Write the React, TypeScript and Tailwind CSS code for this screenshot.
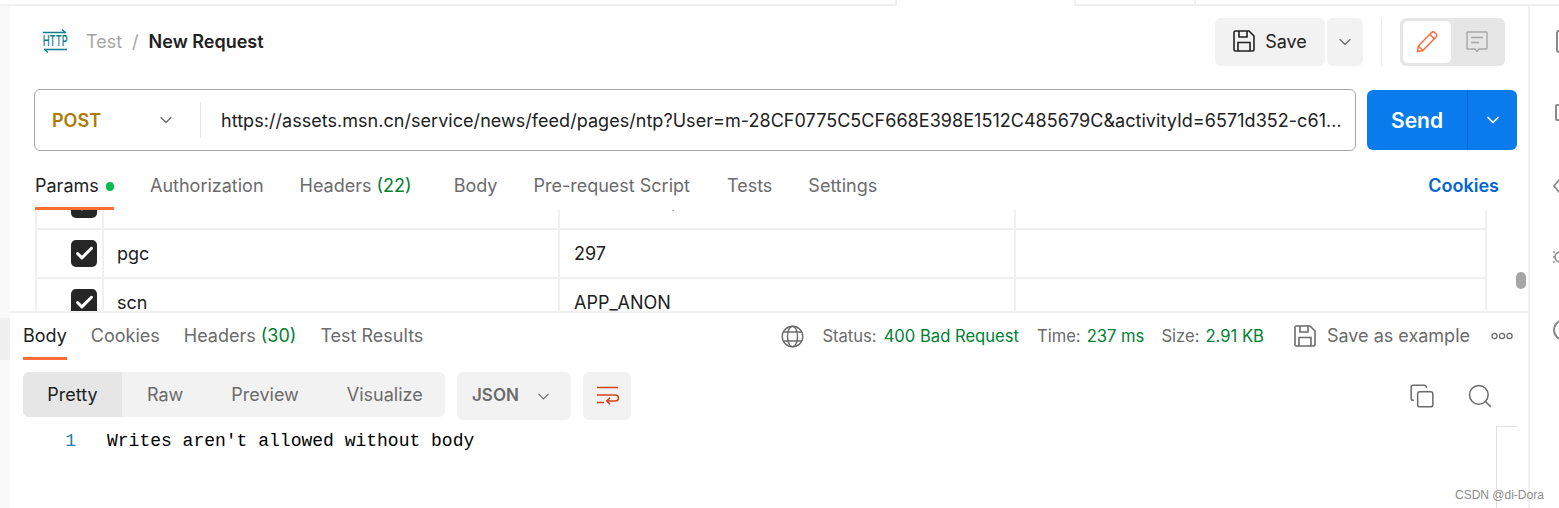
import { Check, ChevronDown, Copy, Search } from "lucide-react"

function HttpIcon() {
  return (
    <div className="flex w-[24px] flex-col items-center text-[#0E7C8B]">
      <svg width="24" height="5" viewBox="0 0 24 5" fill="none" stroke="currentColor" strokeWidth="1.3" className="block">
        <path d="M0 3.500h23M19 .5l3.500 3" />
      </svg>
      <span className="scale-x-[0.62] text-[15px] font-medium leading-[14px]">HTTP</span>
      <svg width="24" height="5" viewBox="0 0 24 5" fill="none" stroke="currentColor" strokeWidth="1.3" className="block">
        <path d="M1 1.500h23M5 4.500l-3.500-3" />
      </svg>
    </div>
  )
}

function SaveIcon({ className }: { className: string }) {
  return (
    <svg viewBox="0 0 22 22" fill="none" stroke="currentColor" strokeWidth="1.6" className={className}>
      <path d="M1 2.500a1.500 1.500 0 0 1 1.500-1.500h13.500l5 5v13.500a1.500 1.500 0 0 1-1.500 1.500h-17a1.500 1.500 0 0 1-1.500-1.500z" />
      <path d="M6 1v6h8V1M5 21v-8.500h12V21" />
    </svg>
  )
}

function PencilIcon() {
  return (
    <svg width="24" height="24" viewBox="0 0 24 24" fill="none" stroke="#FF6C37" strokeWidth="1.5">
      <path d="M2.500 21.500l.8-5.500L16.500 2.500a2.200 2.200 0 0 1 3.200 0l1.300 1.300a2.200 2.200 0 0 1 0 3.200L7.800 20.500z" />
      <path d="M15 4.500l4.500 4.500M3.300 16l4.500 4.500" />
    </svg>
  )
}

function CommentIcon() {
  return (
    <svg width="22" height="22" viewBox="0 0 22 22" fill="none" stroke="#A6A6A6" strokeWidth="1.4">
      <path d="M1.500 1h19a.5.5 0 0 1 .5.500v16a.5.5 0 0 1-.5.500h-7.500l-2 2.500-2-2.500h-7.500a.5.5 0 0 1-.5-.500v-16a.5.5 0 0 1 .5-.500z" />
      <path d="M5 6.500h12M5 11.500h8" />
    </svg>
  )
}

function GlobeIcon() {
  return (
    <svg width="23" height="23" viewBox="0 0 23 23" fill="none" stroke="#6B6B6B" strokeWidth="1.4">
      <circle cx="11.500" cy="11.500" r="10.300" />
      <ellipse cx="11.500" cy="11.500" rx="5" ry="10.300" />
      <path d="M2.500 7h18M2.500 16h18" />
    </svg>
  )
}

function WrapIcon() {
  return (
    <svg width="24" height="24" viewBox="0 0 24 24" fill="none" stroke="#D4421C" strokeWidth="1.6">
      <path d="M2 3.500h21M2 11h18.500a2.800 2.800 0 0 1 0 6H12M15 13.800L11.800 17l3.200 3.200M2 18.500h7" />
    </svg>
  )
}

function Dots() {
  return (
    <svg width="22" height="8" viewBox="0 0 22 8" fill="none" stroke="#6B6B6B" strokeWidth="1.3">
      <circle cx="3.500" cy="4" r="2.600" />
      <circle cx="11" cy="4" r="2.600" />
      <circle cx="18.500" cy="4" r="2.600" />
    </svg>
  )
}

function ParamRow({ name, value, clipped }: { name: string; value: string; clipped?: boolean }) {
  return (
    <div className={`flex h-[49px] border-b-2 border-[#F0F0F0] ${clipped ? "-mt-[29px]" : ""}`}>
      <div className="flex w-[67px] items-center justify-end border-r-2 border-[#F0F0F0] pr-[5px]">
        <span className="flex h-[27px] w-[26px] items-center justify-center rounded-[5px] bg-[#262626] text-white">
          <Check size={21} strokeWidth={3.500} />
        </span>
      </div>
      <div className={`flex w-[456px] items-center border-r-2 border-[#F0F0F0] pl-[13px] ${clipped ? "pb-[9px]" : ""}`}>{name}</div>
      <div className={`flex w-[456px] items-center border-r-2 border-[#F0F0F0] pl-[14px] ${clipped ? "pb-[9px]" : ""}`}>{value}</div>
      <div className="flex-1" />
    </div>
  )
}

function Params() {
  return (
    <div className="relative h-[101px] overflow-hidden pl-[25px] pr-[41px] text-[#212121]">
      <div className="border-x-2 border-[#F0F0F0]">
        <ParamRow clipped name="ocid" value="anaheim-ntp-feeds" />
        <ParamRow name="pgc" value="297" />
        <ParamRow name="scn" value="APP_ANON" />
      </div>
      <div className="absolute right-[2px] top-[62px] h-[17px] w-[10px] rounded-full bg-[#A6A6A6]" />
    </div>
  )
}

function RequestTabs() {
  return (
    <div className="flex h-[59px] items-start gap-[36px] pl-[25px] pr-[29px] pt-[16px] leading-[38px] text-[#6B6B6B]">
      <div className="relative flex h-[43px] w-[79px] items-start gap-[7px] text-[#212121]">
        Params
        <span className="mt-[15px] h-[9px] w-[9px] rounded-full bg-[#0CBB52]" />
        <span className="absolute bottom-0 left-0 h-[3px] w-full bg-[#FF6C37]" />
      </div>
      <span>Authorization</span>
      <span className="mr-[6px]">
        Headers <span className="text-[#007F31]">(22)</span>
      </span>
      <span>Body</span>
      <span>Pre-request Script</span>
      <span className="ml-[1px]">Tests</span>
      <span>Settings</span>
      <span className="ml-auto font-semibold text-[#0265D2]">Cookies</span>
    </div>
  )
}

function ResponseBar() {
  return (
    <div className="flex h-[49px] items-start gap-[24px] border-t-2 border-[#F0F0F0] pl-[13px] pr-[15px] pt-[5px] leading-[36px] text-[#6B6B6B]">
      <div className="relative h-[42px] text-[#212121]">
        Body
        <span className="absolute bottom-0 left-0 h-[3px] w-[44px] bg-[#FF6C37]" />
      </div>
      <span>Cookies</span>
      <span>
        Headers <span className="text-[#007F31]">(30)</span>
      </span>
      <span>Test Results</span>
      <div className="ml-auto flex h-[36px] items-center text-[16.600px]">
        <GlobeIcon />
        <span className="ml-[18px]">Status:</span>
        <span className="ml-[7px] text-[#007F31]">400 Bad Request</span>
        <span className="ml-[18px]">Time:</span>
        <span className="ml-[6px] text-[#007F31]">237 ms</span>
        <span className="ml-[17px]">Size:</span>
        <span className="ml-[6px] text-[#007F31]">2.91 KB</span>
        <SaveIcon className="ml-[30px] h-[22px] w-[22px]" />
        <span className="ml-[11px] text-[18px]">Save as example</span>
        <span className="ml-[21px]">
          <Dots />
        </span>
      </div>
    </div>
  )
}

function ResponseToolbar() {
  return (
    <div className="mt-[12px] flex items-start pl-[13px] pr-[34px] text-[#6B6B6B]">
      <div className="flex h-[45px] w-[422px] items-center overflow-hidden rounded-[6px] bg-[#F2F2F2]">
        <span className="flex h-full w-[99px] items-center justify-center bg-[#E6E6E6] text-[#212121]">Pretty</span>
        <span className="ml-[25px]">Raw</span>
        <span className="ml-[48px]">Preview</span>
        <span className="ml-[48px]">Visualize</span>
      </div>
      <div className="ml-[12px] flex h-[48px] w-[114px] items-center rounded-[6px] bg-[#F2F2F2] pl-[15px] text-[17px] font-semibold">
        JSON
        <ChevronDown size={19} strokeWidth={1.5} className="ml-[15px]" />
      </div>
      <div className="ml-[12px] flex h-[48px] w-[48px] items-center justify-center rounded-[6px] bg-[#F2F2F2]">
        <WrapIcon />
      </div>
      <Copy size={26} strokeWidth={1.4} className="ml-auto mt-[11px]" />
      <Search size={28} strokeWidth={1.3} className="ml-[31px] mt-[10px]" />
    </div>
  )
}

export default function App() {
  return (
    <div className="relative flex h-[508px] w-[1559px] flex-col overflow-hidden bg-white font-['Inter',sans-serif] text-[18px]">
      <div className="flex h-[6px] shrink-0">
        <div className="w-[897px] border-b-2 border-r-2 border-[#F0F0F0]" />
        <div className="w-[177px]" />
        <div className="w-[122px] border-b-2 border-l-2 border-r-2 border-[#F0F0F0]" />
        <div className="flex-1 border-b-2 border-[#F0F0F0]" />
      </div>

      <div className="flex min-h-0 flex-1">
        <div className="w-[10px] shrink-0 bg-[#F9F9F9] pt-[312px]">
          <div className="h-[42px] bg-[#F0F0F0]" />
        </div>

        <div className="min-w-0 flex-1">
          <div className="flex h-[83px] items-start pl-[33px] pr-[23px] pt-[12px]">
            <div className="flex h-[48px] items-center pb-[2px]">
              <HttpIcon />
              <span className="ml-[19px] text-[#A6A6A6]">Test</span>
              <span className="ml-[10px] text-[#A6A6A6]">/</span>
              <span className="ml-[10px] font-semibold text-[#212121]">New Request</span>
            </div>
            <div className="ml-auto flex h-[48px] items-center">
              <div className="flex h-full w-[110px] items-center justify-center gap-[10px] rounded-[6px] bg-[#F2F2F2] pb-[2px] text-[#212121]">
                <SaveIcon className="h-[22px] w-[22px]" />
                Save
              </div>
              <div className="ml-[2px] flex h-full w-[36px] items-center justify-center rounded-[6px] bg-[#F2F2F2] text-[#6B6B6B]">
                <ChevronDown size={20} strokeWidth={1.5} />
              </div>
              <div className="ml-[18px] h-full w-px bg-[#EDEDED]" />
              <div className="ml-[18px] flex h-full w-[105px] items-center rounded-[6px] bg-[#E6E6E6] p-[3px]">
                <span className="flex h-full w-[48px] items-center justify-center rounded-[5px] bg-white">
                  <PencilIcon />
                </span>
                <span className="flex flex-1 items-center justify-center">
                  <CommentIcon />
                </span>
              </div>
            </div>
          </div>

          <div className="flex items-center pl-[24px] pr-[11px]">
            <div className="flex h-[62px] w-[1322px] items-center rounded-[6px] border border-[#A6A6A6]">
              <div className="flex h-[36px] w-[166px] shrink-0 items-center border-r border-[#E6E6E6] pl-[17px] pr-[24px]">
                <span className="font-semibold text-[#AD7A03]">POST</span>
                <ChevronDown size={20} strokeWidth={1.5} className="ml-auto text-[#6B6B6B]" />
              </div>
              <div className="min-w-0 flex-1 truncate pl-[20px] pr-[12px] tracking-[0.04px] text-[#212121]">
                https://assets.msn.cn/service/news/feed/pages/ntp?User=m-28CF0775C5CF668E398E1512C485679C&activityId=6571d352-c618-4a2b-9d1e-7b0c3f8e5a12
              </div>
            </div>
            <div className="ml-[11px] flex h-[60px] w-[150px] items-center rounded-[6px] bg-[#097BED] text-white">
              <span className="flex h-full w-[101px] items-center justify-center border-r border-[#0265D2] pt-[1px] text-[21px] font-semibold">
                Send
              </span>
              <span className="flex flex-1 items-center justify-center">
                <ChevronDown size={20} strokeWidth={2} />
              </span>
            </div>
          </div>

          <RequestTabs />
          <Params />
          <ResponseBar />
          <ResponseToolbar />

          <div className="mt-[8px] flex font-['Liberation_Mono',monospace] leading-[27px] text-black">
            <span className="w-[97px] pr-[31px] text-right text-[#1F7FA8]">1</span>
            <span>Writes aren't allowed without body</span>
          </div>
        </div>

        <div className="w-[31px] shrink-0 overflow-hidden border-l-2 border-[#F0F0F0] pl-[23px] text-[#8A8A8A]">
          <div className="ml-[3px] mt-[24px] h-[23px] w-[20px] rounded-[3px] border-2 border-[#8A8A8A]" />
          <div className="ml-[2px] mt-[51px] h-[17px] w-[20px] rounded-[2px] border-2 border-[#8A8A8A]" />
          <svg width="8" height="16" viewBox="0 0 8 16" fill="none" stroke="currentColor" strokeWidth="1.8" className="mt-[57px]">
            <path d="M7 1L1 8l6 7" />
          </svg>
          <svg width="8" height="16" viewBox="0 0 8 16" fill="none" stroke="currentColor" strokeWidth="1.6" className="mt-[55px]">
            <path d="M0 3h2M0 8h2M0 13h2M7 3a5 5 0 0 0 0 10" />
          </svg>
          <div className="mt-[54px] h-[22px] w-[22px] rounded-full border-2 border-[#8A8A8A]" />
        </div>
      </div>

      {/* leftover box and watermark sit on top of the panel */}
      <div className="absolute left-[1496px] top-[426px] h-[90px] w-[21px] border-l border-t border-[#E0E0E0]" />
      <span className="absolute left-[1455px] top-[486px] font-['Liberation_Sans',sans-serif] text-[12px] text-[#8C8C8C]">CSDN @di-Dora</span>
    </div>
  )
}
